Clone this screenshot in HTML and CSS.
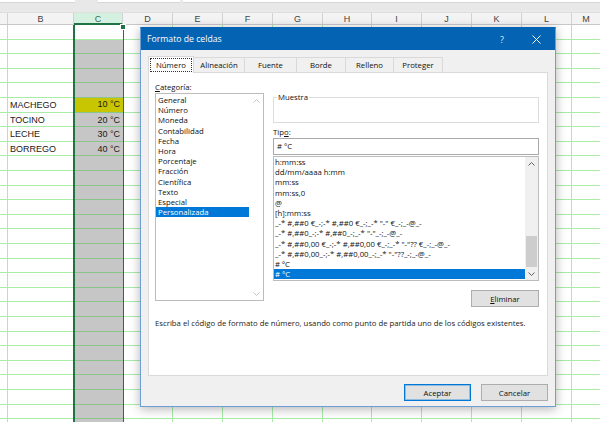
FILE: index.html
```html
<!DOCTYPE html>
<html lang="es">
<head>
<meta charset="utf-8">
<title>Formato de celdas</title>
<link rel="stylesheet" href="styles.css">
</head>
<body>
<div class="app">
  <div class="toolbar">
    <div class="tb-box tb-name"></div>
    <div class="tb-box tb-fx"></div>
    <div class="tb-box tb-formula"></div>
  </div>
  <div class="col-headers">
    <div class="ch ch-a"></div>
    <div class="ch ch-b">B</div>
    <div class="ch ch-c">C</div>
    <div class="ch">D</div>
    <div class="ch">E</div>
    <div class="ch">F</div>
    <div class="ch">G</div>
    <div class="ch ch-h">H</div>
    <div class="ch">I</div>
    <div class="ch">J</div>
    <div class="ch">K</div>
    <div class="ch">L</div>
    <div class="ch ch-m">M</div>
  </div>
  <div class="sheet">
    <div class="col col-a"></div>
    <div class="col col-b">
      <div class="cell"></div>
      <div class="cell"></div>
      <div class="cell"></div>
      <div class="cell"></div>
      <div class="cell"></div>
      <div class="cell txt">MACHEGO</div>
      <div class="cell txt">TOCINO</div>
      <div class="cell txt">LECHE</div>
      <div class="cell txt">BORREGO</div>
    </div>
    <div class="col col-c">
      <div class="cell white"></div>
      <div class="cell"></div>
      <div class="cell"></div>
      <div class="cell"></div>
      <div class="cell"></div>
      <div class="cell num yellow">10 °C</div>
      <div class="cell num">20 °C</div>
      <div class="cell num">30 °C</div>
      <div class="cell num">40 °C</div>
    </div>
    <div class="col col-d"></div>
    <div class="col"></div>
    <div class="col"></div>
    <div class="col"></div>
    <div class="col col-h"></div>
    <div class="col"></div>
    <div class="col"></div>
    <div class="col"></div>
    <div class="col"></div>
    <div class="col col-m"></div>
  </div>

  <div class="dialog">
    <div class="titlebar">
      <span class="title">Formato de celdas</span>
      <span class="tb-help">?</span>
      <span class="tb-close"><svg width="9" height="9" viewBox="0 0 9 9"><path d="M0.5 0.5L8.5 8.5M8.5 0.5L0.5 8.5" stroke="#fff" stroke-width="1" fill="none"/></svg></span>
    </div>
    <div class="dlg-body">
      <div class="tabs">
        <div class="tab active"><span class="focus">Número</span></div>
        <div class="tab w51">Alineación</div>
        <div class="tab w52">Fuente</div>
        <div class="tab w49">Borde</div>
        <div class="tab w48">Relleno</div>
        <div class="tab w49">Proteger</div>
      </div>
      <div class="panel">
        <div class="panel-cols">
          <div class="left">
            <div class="label"><u>C</u>ategoría:</div>
            <div class="listbox cat">
              <ul class="items">
                <li>General</li>
                <li>Número</li>
                <li>Moneda</li>
                <li>Contabilidad</li>
                <li>Fecha</li>
                <li>Hora</li>
                <li>Porcentaje</li>
                <li>Fracción</li>
                <li>Científica</li>
                <li>Texto</li>
                <li>Especial</li>
                <li class="sel">Personalizada</li>
              </ul>
              <div class="vscroll light">
                <div class="arrow"><svg width="7" height="4" viewBox="0 0 7 4"><path d="M0.5 3.5L3.5 0.5L6.5 3.5" fill="none" stroke="#c4c4c4"/></svg></div>
                <div class="track"></div>
                <div class="arrow"><svg width="7" height="4" viewBox="0 0 7 4"><path d="M0.5 0.5L3.5 3.5L6.5 0.5" fill="none" stroke="#c4c4c4"/></svg></div>
              </div>
            </div>
          </div>
          <div class="right">
            <fieldset class="sample"><legend>Muestra</legend></fieldset>
            <div class="label">Tip<u>o</u>:</div>
            <div class="input"># °C</div>
            <div class="listbox types">
              <ul class="items">
                <li>h:mm:ss</li>
                <li>dd/mm/aaaa h:mm</li>
                <li>mm:ss</li>
                <li>mm:ss,0</li>
                <li>@</li>
                <li>[h]:mm:ss</li>
                <li>_-* #,##0 €_-;-* #,##0 €_-;_-* "-" €_-;_-@_-</li>
                <li>_-* #,##0_-;-* #,##0_-;_-* "-"_-;_-@_-</li>
                <li>_-* #,##0,00 €_-;-* #,##0,00 €_-;_-* "-"?? €_-;_-@_-</li>
                <li>_-* #,##0,00_-;-* #,##0,00_-;_-* "-"??_-;_-@_-</li>
                <li># ºC</li>
                <li class="sel"># °C</li>
              </ul>
              <div class="vscroll grey">
                <div class="arrow"><svg width="7" height="4" viewBox="0 0 7 4"><path d="M0.5 3.5L3.5 0.5L6.5 3.5" fill="none" stroke="#606060"/></svg></div>
                <div class="track"><div class="thumb"></div></div>
                <div class="arrow"><svg width="7" height="4" viewBox="0 0 7 4"><path d="M0.5 0.5L3.5 3.5L6.5 0.5" fill="none" stroke="#606060"/></svg></div>
              </div>
            </div>
            <div class="btn-row"><button class="btn wide"><u>E</u>liminar</button></div>
          </div>
        </div>
        <p class="desc">Escriba el código de formato de número, usando como punto de partida uno de los códigos existentes.</p>
      </div>
      <div class="actions">
        <button class="btn default">Aceptar</button>
        <button class="btn">Cancelar</button>
      </div>
    </div>
  </div>
</div>
</body>
</html>
```

FILE: styles.css
```css
* { box-sizing: border-box; }
html, body { margin: 0; padding: 0; }
body { background: #fff; font-family: "Liberation Sans", Arial, sans-serif; }

.app {
  position: relative;
  width: 600px;
  height: 422px;
  overflow: hidden;
  background: #fff;
}

/* top strip */
.toolbar {
  height: 12px;
  background: #e8e8e8;
  display: flex;
  align-items: flex-start;
}
.tb-box { height: 3px; background: #fff; border-bottom: 1px solid #d6d6d6; }
.tb-name { width: 75px; }
.tb-fx { width: 82px; margin-left: 23px; }
.tb-formula { flex: 1; margin-left: 3px; }

/* column headers */
.col-headers {
  display: flex;
  height: 13px;
  background: #f3f3f3;
  border-top: 1px solid #dedede;
  border-bottom: 1px solid #c8c8c8;
}
.ch {
  flex: none;
  width: 50px;
  border-right: 1px solid #d2d2d2;
  font: 9px/12px "Liberation Sans", Arial, sans-serif;
  color: #444;
  text-align: center;
}
.ch-a { width: 8px; }
.ch-b { width: 66px; }
.ch-c {
  width: 49px;
  background: #d3f0e0;
  color: #3a6e50;
  border-bottom: 2px solid #217346;
  margin-bottom: -1px;
}
.ch-h { width: 49px; }
.ch-m { flex: 1; border-right: 0; }

/* sheet grid */
.sheet {
  display: flex;
  height: 397px;
}
.col {
  flex: none;
  width: 50px;
  border-right: 1px solid #a8eca8;
  display: grid;
  grid-auto-rows: 14.6px;
  align-content: start;
  background-image: repeating-linear-gradient(to bottom, transparent 0, transparent 13.6px, #a8eca8 13.6px, #a8eca8 14.6px);
}
.col-a { width: 8px; }
.col-b { width: 65px; border-right: 0; }
.col-c {
  position: relative;
  width: 51px;
  border-left: 2px solid #217346;
  border-right: 1px solid #217346;
  background-color: #c6c6c6;
  background-image: repeating-linear-gradient(to bottom, transparent 0, transparent 13.6px, #8cc58c 13.6px, #8cc58c 14.6px);
}
.col-c::after {
  content: "";
  position: absolute;
  right: -3px;
  top: -1px;
  width: 4px;
  height: 4px;
  background: #217346;
  border: 1px solid #fff;
}
.col-d { width: 49px; }
.col-h { width: 49px; }
.col-m { flex: 1; border-right: 0; }

.cell {
  font: 9px/14.6px "Liberation Sans", Arial, sans-serif;
  color: #1a1a1a;
  white-space: nowrap;
}
.cell.txt { padding-left: 2px; }
.cell.num { text-align: right; padding-right: 3px; }
.cell.white { background: #fff; border-bottom: 1px solid #a8eca8; }
.cell.yellow { background: #c8c600; border-bottom: 1px solid #8cc58c; line-height: 13.6px; }

/* dialog */
.dialog {
  position: absolute;
  left: 140px;
  top: 27px;
  width: 416px;
  height: 380px;
  background: #f0f0f0;
  border: 1px solid #6d9ed6;
  border-top-color: #0563b4;
  box-shadow: 0 2px 10px rgba(0, 0, 0, 0.3);
  font-family: "Open Sans", "Noto Sans", sans-serif;
  font-size: 7.75px;
  color: #000;
  display: flex;
  flex-direction: column;
}
.titlebar {
  flex: none;
  height: 22px;
  background: #0563b4;
  color: #fff;
  display: flex;
  align-items: center;
  padding-left: 6px;
}
.title { flex: 1; font-size: 8.7px; }
.tb-help { width: 30px; margin-right: 4px; text-align: center; font-size: 9px; color: #dfe9f5; }
.tb-close { width: 30px; margin-right: 4px; display: flex; justify-content: center; }

.dlg-body {
  flex: 1;
  display: flex;
  flex-direction: column;
  padding: 6px 7px 0 7px;
}

.tabs {
  position: relative;
  z-index: 1;
  display: flex;
  align-items: flex-end;
  height: 17px;
  margin-bottom: -1px;
}
.tab {
  flex: none;
  height: 16px;
  background: #f0f0f0;
  border-top: 1px solid #d9d9d9;
  border-right: 1px solid #d9d9d9;
  border-bottom: 1px solid #d9d9d9;
  text-align: center;
  line-height: 14px;
  color: #111;
}
.tab.active {
  width: 46px;
  height: 17px;
  background: #fff;
  border-left: 1px solid #d9d9d9;
  border-bottom: 0;
}
.focus {
  display: block;
  margin: 1px 1px 0;
  height: 14px;
  line-height: 12px;
  border: 1px dotted #333;
}
.w51 { width: 51px; }
.w52 { width: 52px; }
.w49 { width: 49px; }
.w48 { width: 48px; }

.panel {
  flex: none;
  height: 304px;
  background: #fff;
  border: 1px solid #d9d9d9;
  padding: 8px 8px 0 6px;
}
.panel-cols {
  display: grid;
  grid-template-columns: 109px 266px;
  column-gap: 9px;
  align-items: start;
}
.label { height: 12px; line-height: 12px; color: #111; }

.listbox {
  display: flex;
  background: #fff;
  border: 1px solid #bcbcbc;
}
.listbox.cat { height: 208px; }
.listbox.types { height: 125px; margin-top: 1px; }
.items {
  flex: 1;
  min-width: 0;
  list-style: none;
  margin: 0;
  padding: 0;
}
.cat .items { padding-top: 1px; }
.items li {
  height: 10.2px;
  line-height: 10.2px;
  white-space: nowrap;
  overflow: hidden;
  color: #111;
}
.cat .items li { padding-left: 2px; }
.types .items li { padding-left: 1px; }
.items li.sel { background: #0078d7; color: #fff; }

.vscroll {
  flex: none;
  width: 13px;
  display: flex;
  flex-direction: column;
}
.vscroll.light { width: 14px; background: #fff; }
.vscroll.grey { background: #f0f0f0; }
.arrow {
  height: 13px;
  display: flex;
  align-items: center;
  justify-content: center;
}
.track {
  flex: 1;
  display: flex;
  flex-direction: column;
  justify-content: flex-end;
  align-items: center;
}
.thumb { width: 11px; height: 31px; background: #cdcdcd; }

.sample {
  margin: 11px 0 0;
  padding: 0;
  height: 31px;
  border: 1px solid #dcdcdc;
}
.sample legend {
  margin-left: 3px;
  padding: 0 1px;
  line-height: 10px;
  color: #111;
}
.right .label { margin-top: 3px; }
.input {
  height: 17px;
  border: 1px solid #a9a9a9;
  background: #fff;
  padding-left: 3px;
  line-height: 15px;
  color: #111;
}

.btn-row {
  display: flex;
  justify-content: flex-end;
  margin-top: 9px;
}
.btn {
  width: 67px;
  height: 17px;
  padding: 0;
  border: 1px solid #adadad;
  background: #e1e1e1;
  font: inherit;
  color: #111;
}
.btn.wide { width: 68px; }
.btn.default {
  border-color: #0078d7;
  box-shadow: inset 0 0 0 1px rgba(0, 120, 215, 0.35);
}

.desc {
  margin: 11px 0 0;
  line-height: 10px;
  color: #222;
  white-space: nowrap;
}

.actions {
  display: flex;
  justify-content: flex-end;
  gap: 10px;
  margin-top: 8px;
}
```
